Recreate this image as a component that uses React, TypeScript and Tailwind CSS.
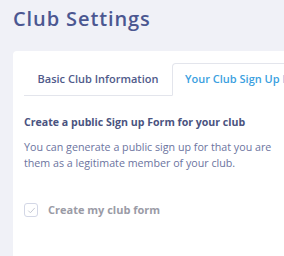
import React from "react";

const App: React.FC = () => {
  return (
    <div
      className="h-[256px] w-[284px] overflow-hidden bg-[#f0f1f7] pl-[13px] pt-[5px]"
      style={{ fontFamily: '"Open Sans", sans-serif' }}
    >
      <h1 className="text-[20px] font-semibold leading-[28px] tracking-[0.9px] text-[#4b5791]">
        Club Settings
      </h1>
      <div className="mt-[18px] h-[220px] w-[300px] rounded-tl-[4px] bg-white pl-[11px] pt-[12px]">
        {/* tabs */}
        <div className="flex h-[33px] border-b border-[#e3e5ec]">
          <div className="flex w-[148px] shrink-0 items-center justify-center text-[11px] font-semibold text-[#4f5a8a]">
            Basic Club Information
          </div>
          <div className="-mb-px flex shrink-0 items-center whitespace-nowrap rounded-t-[4px] border border-b-white border-[#e3e5ec] bg-white pl-[12px] pr-4 text-[11px] font-semibold text-[#3b9fe0]">
            Your Club Sign Up Form
          </div>
        </div>
        <div className="pt-[18px]">
          <h2 className="text-[10.6px] font-bold leading-[16px] text-[#4a5380]">
            Create a public Sign up Form for your club
          </h2>
          <p className="mt-[9px] whitespace-nowrap text-[10.7px] leading-[16px] text-[#6c74a0]">
            You can generate a public sign up for that you are
            <br />
            them as a legitimate member of your club.
          </p>
          <label className="mt-[31px] flex items-center gap-[10px]">
            <span className="flex h-[14px] w-[14px] items-center justify-center rounded-[3px] border border-[#d3d7e6] bg-white">
              <svg viewBox="0 0 12 12" className="h-[9px] w-[9px]" fill="none">
                <path
                  d="M2 6.5l2.5 2.5L10 3"
                  stroke="#c4c7d2"
                  strokeWidth={1.3}
                  strokeLinecap="round"
                  strokeLinejoin="round"
                />
              </svg>
            </span>
            <span className="text-[11px] font-bold text-[#9a9ba6]">
              Create my club form
            </span>
          </label>
        </div>
      </div>
    </div>
  );
};

export default App;
